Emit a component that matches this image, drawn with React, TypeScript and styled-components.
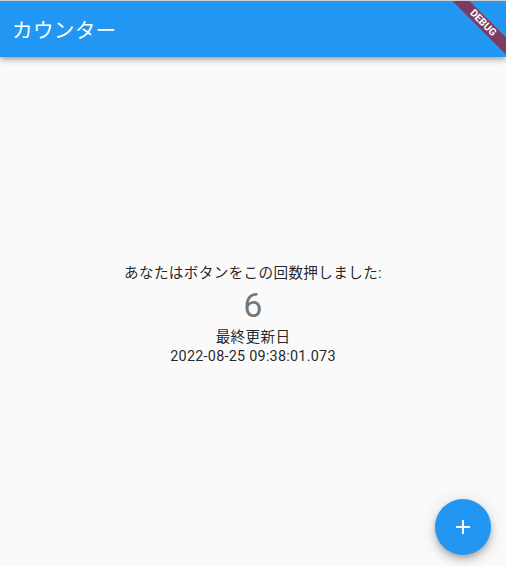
import React, { useState } from "react";
import styled, { createGlobalStyle } from "styled-components";

const GlobalStyle = createGlobalStyle`
  html, body {
    margin: 0;
    padding: 0;
    background: #fafafa;
  }
  body {
    font-family: Roboto, "Noto Sans CJK JP", sans-serif;
  }
`;

const Screen = styled.div`
  position: relative;
  width: 506px;
  height: 566px;
  display: flex;
  flex-direction: column;
  background: #fafafa;
  border-top: 1px solid #d0d0d0;
  box-sizing: border-box;
  overflow: hidden;
`;

const AppBar = styled.header`
  height: 56px;
  flex: none;
  display: flex;
  align-items: center;
  padding: 0 16px 0 12px;
  background: #2196f3;
  color: #ffffff;
  box-shadow: 0 2px 4px -1px rgba(0, 0, 0, 0.2), 0 4px 5px 0 rgba(0, 0, 0, 0.14),
    0 1px 10px 0 rgba(0, 0, 0, 0.12);
  z-index: 1;
`;

const Title = styled.h1`
  margin: 0;
  font-size: 20.6px;
  font-weight: 400;
  letter-spacing: 0.3px;
`;

const Body = styled.main`
  flex: 1;
  display: flex;
  flex-direction: column;
  align-items: center;
  justify-content: center;
  padding-top: 6px;
`;

const Label = styled.div`
  font-size: 14.6px;
  letter-spacing: 0.35px;
  line-height: 20px;
  color: rgba(0, 0, 0, 0.87);
`;

const Count = styled.div`
  font-size: 34px;
  line-height: 44px;
  letter-spacing: 0.25px;
  color: rgba(0, 0, 0, 0.54);
`;

const Stamp = styled(Label)`
  font-size: 14.4px;
  letter-spacing: 0.25px;
  line-height: 20px;
`;

const Fab = styled.button`
  position: absolute;
  right: 15px;
  bottom: 11px;
  width: 56px;
  height: 56px;
  border: none;
  border-radius: 50%;
  background: #2196f3;
  color: #ffffff;
  display: flex;
  align-items: center;
  justify-content: center;
  padding: 0;
  cursor: pointer;
  box-shadow: 0 3px 5px -1px rgba(0, 0, 0, 0.2), 0 6px 10px 0 rgba(0, 0, 0, 0.14),
    0 1px 18px 0 rgba(0, 0, 0, 0.12);
`;

const Banner = styled.div`
  position: absolute;
  top: 16px;
  left: 423px;
  width: 120px;
  height: 12px;
  transform: rotate(45deg);
  background: rgba(160, 24, 40, 0.72);
  color: #ffffff;
  font-family: Roboto, sans-serif;
  font-size: 10.2px;
  font-weight: 700;
  line-height: 12px;
  text-align: center;
  z-index: 2;
`;

const App = () => {
  const [count, setCount] = useState(6);
  const [updated, setUpdated] = useState("2022-08-25 09:38:01.073");

  const handleAdd = () => {
    setCount(count + 1);
    const d = new Date();
    const p = (n: number, l = 2) => String(n).padStart(l, "0");
    setUpdated(
      `${d.getFullYear()}-${p(d.getMonth() + 1)}-${p(d.getDate())} ${p(
        d.getHours()
      )}:${p(d.getMinutes())}:${p(d.getSeconds())}.${p(d.getMilliseconds(), 3)}`
    );
  };

  return (
    <Screen>
      <GlobalStyle />
      <AppBar>
        <Title>カウンター</Title>
      </AppBar>
      <Body>
        <Label>あなたはボタンをこの回数押しました:</Label>
        <Count>{count}</Count>
        <Label>最終更新日</Label>
        <Stamp>{updated}</Stamp>
      </Body>
      <Fab onClick={handleAdd} aria-label="Increment">
        <svg width="24" height="24" viewBox="0 0 24 24">
          <path d="M19 13h-6v6h-2v-6H5v-2h6V5h2v6h6v2z" fill="#ffffff" />
        </svg>
      </Fab>
      <Banner>DEBUG</Banner>
    </Screen>
  );
};

export default App;
